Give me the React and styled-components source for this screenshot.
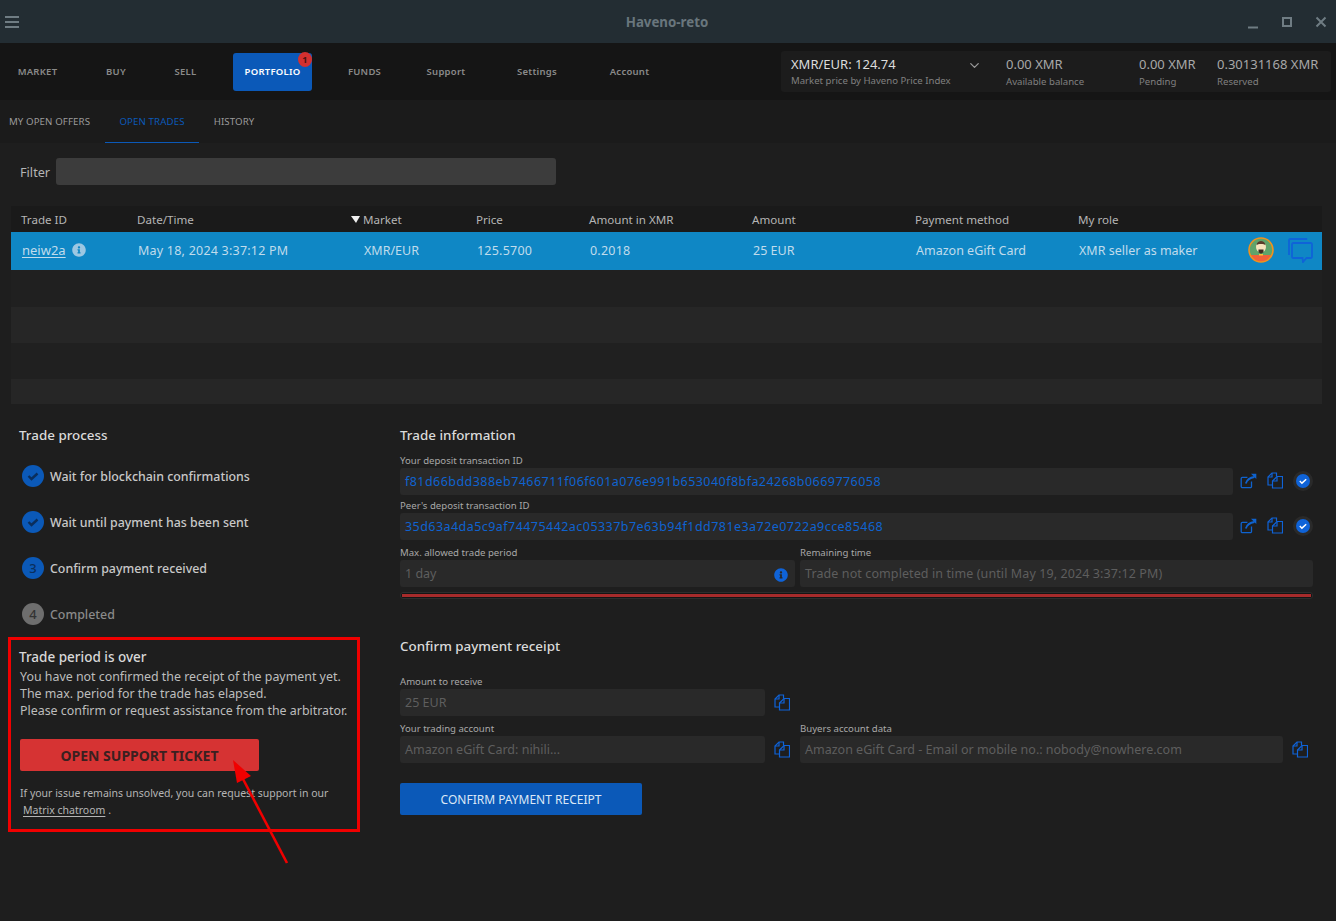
import React from "react";
import styled, { createGlobalStyle } from "styled-components";
import { FaInfoCircle } from "react-icons/fa";
import { ChevronDown } from "lucide-react";

const GlobalStyle = createGlobalStyle`
  html, body {
    margin: 0;
    padding: 0;
    background: #1e1e1e;
  }
  * {
    box-sizing: border-box;
  }
  body {
    font-family: "Noto Sans", "Liberation Sans", sans-serif;
    color: #c8c8c8;
  }
`;

const Page = styled.div`
  width: 1336px;
  height: 921px;
  overflow: hidden;
  position: relative;
  background: #1e1e1e;
`;

const TitleBar = styled.header`
  height: 43px;
  background: #232d33;
  display: flex;
  align-items: center;
  justify-content: space-between;
  padding: 0 8px 0 5px;
  position: relative;
`;

const AppTitle = styled.div`
  position: absolute;
  left: 0;
  right: 2px;
  text-align: center;
  font-size: 13.3px;
  font-weight: 700;
  color: #69767d;
`;

const WindowButtons = styled.div`
  display: flex;
  align-items: center;
  gap: 20px;
`;

const NavBar = styled.nav`
  height: 57px;
  background: #151515;
  display: flex;
  align-items: center;
  justify-content: space-between;
  padding-right: 5px;
`;

const NavItems = styled.div`
  display: flex;
  align-items: center;
`;

const NavItem = styled.div`
  width: ${(p) => p.$w}px;
  height: 38px;
  margin-left: ${(p) => p.$ml || 0}px;
  display: flex;
  align-items: center;
  justify-content: center;
  position: relative;
  font-size: 9.5px;
  font-weight: 600;
  letter-spacing: 0.25px;
  border-radius: 3px;
  color: ${(p) => (p.$active ? "#fff" : "#8a8a8a")};
  background: ${(p) => (p.$active ? "#0b59b8" : "transparent")};
`;

const Badge = styled.span`
  position: absolute;
  top: -1px;
  right: 0;
  width: 14px;
  height: 15px;
  border-radius: 50%;
  background: #d3302f;
  color: #4a1010;
  font-size: 9px;
  font-weight: 700;
  display: flex;
  align-items: center;
  justify-content: center;
`;

const BalancePanel = styled.div`
  width: 550px;
  height: 41px;
  background: #1c1c1c;
  border-radius: 3px;
  display: flex;
  align-items: center;
  padding-left: 10px;
  position: relative;
`;

const BalanceBlock = styled.div`
  width: ${(p) => p.$w}px;
  margin-top: ${(p) => p.$mt || 0}px;
  display: flex;
  flex-direction: column;
  gap: ${(p) => p.$gap}px;
`;

const BalanceValue = styled.div`
  font-size: 13px;
  line-height: 15px;
  color: ${(p) => (p.$bright ? "#dcdcdc" : "#a8a8a8")};
`;

const BalanceLabel = styled.div`
  font-size: 9.6px;
  line-height: 13px;
  color: #808080;
  white-space: nowrap;
`;

const PriceChevron = styled(ChevronDown)`
  position: absolute;
  left: 186px;
  top: 7px;
  color: #9a9a9a;
`;

const TabBar = styled.div`
  height: 43px;
  background: #1b1b1b;
  display: flex;
`;

const Tab = styled.div`
  width: ${(p) => p.$w}px;
  margin-left: ${(p) => p.$ml || 0}px;
  display: flex;
  align-items: center;
  justify-content: center;
  font-size: 9.7px;
  letter-spacing: 0.1px;
  color: ${(p) => (p.$active ? "#0b59b8" : "#9a9a9a")};
  border-bottom: 1px solid ${(p) => (p.$active ? "#0b59b8" : "transparent")};
`;

const FilterRow = styled.div`
  display: flex;
  align-items: center;
  gap: 6px;
  padding: 15px 0 0 20px;
  font-size: 12.7px;
  color: #b5b5b5;
`;

const FilterLabel = styled.span`
  margin-top: 1px;
`;

const FilterInput = styled.div`
  width: 500px;
  height: 27px;
  background: #3c3c3c;
  border-radius: 3px;
`;

const Table = styled.div`
  width: 1311px;
  margin: 21px 0 0 11px;
`;

const columns = "116px 224px 115px 113px 163px 163px 163px 1fr";

const HeaderRow = styled.div`
  display: grid;
  grid-template-columns: ${columns};
  height: 26px;
  align-items: center;
  background: #1a1a1a;
  font-size: 11.6px;
  color: #b5b5b5;
`;

const HeaderCell = styled.div`
  padding-left: 10px;
  display: flex;
  align-items: center;
  gap: 3px;
`;

const SortCaret = styled.span`
  width: 0;
  height: 0;
  border-left: 5px solid transparent;
  border-right: 4px solid transparent;
  border-top: 7px solid #f0f0f0;
  margin-left: -10px;
`;

const SelectedRow = styled.div`
  display: grid;
  grid-template-columns: ${columns};
  height: 38px;
  padding-bottom: 2px;
  align-items: center;
  background: #0f87c5;
  font-size: 12.5px;
  color: #c0dcec;
  position: relative;
`;

const BodyCell = styled.div`
  padding-left: 11px;
  display: flex;
  align-items: center;
  gap: 6px;
  white-space: nowrap;
  letter-spacing: ${(p) => (p.$wide ? "0.22px" : "0")};

  &:nth-child(3) {
    padding-left: 13px;
  }
`;

const TradeLink = styled.span`
  font-size: 13px;
  text-decoration: underline;
  text-underline-offset: 2px;
`;

const RowIcons = styled.div`
  position: absolute;
  right: 9px;
  top: 5px;
  display: flex;
  align-items: center;
  gap: 14px;
`;

const EmptyRow = styled.div`
  height: ${(p) => p.$h}px;
  background: ${(p) => (p.$alt ? "#262626" : "#202020")};
`;

const Lower = styled.div`
  display: grid;
  grid-template-columns: 400px 913px;
  padding-top: 22px;
`;

const LeftColumn = styled.section`
  display: flex;
  flex-direction: column;
`;

const RightColumn = styled.section`
  display: flex;
  flex-direction: column;
`;

const SectionTitle = styled.h2`
  margin: 0;
  font-size: 13.4px;
  line-height: 18px;
  font-weight: 500;
  color: #dadada;
`;

const ProcessTitle = styled(SectionTitle)`
  padding-left: 19px;
`;

const Steps = styled.div`
  display: flex;
  flex-direction: column;
  gap: 24px;
  padding: 21px 0 0 22px;
`;

const Step = styled.div`
  display: flex;
  align-items: center;
  gap: 6px;
  font-size: 12.4px;
  font-weight: 500;
  color: ${(p) => (p.$muted ? "#8a8a8a" : "#c8c8c8")};
`;

const StepCircle = styled.span`
  width: 22px;
  height: 22px;
  border-radius: 50%;
  background: ${(p) => (p.$muted ? "#6e6e6e" : "#0b59b8")};
  color: ${(p) => (p.$muted ? "#333" : "#0a2e5c")};
  font-size: 13px;
  display: flex;
  align-items: center;
  justify-content: center;
`;

const AlertBox = styled.div`
  width: 352px;
  height: 195px;
  margin: 12px 0 0 8px;
  padding: 8px 0 0 9px;
  border: 3px solid #f00000;
`;

const AlertTitle = styled.div`
  margin: 0 0 2px -1px;
  font-size: 13.5px;
  line-height: 18px;
  font-weight: 500;
  color: #d8d8d8;
`;

const AlertText = styled.div`
  font-size: 12.4px;
  line-height: 17px;
  color: #bdbdbd;
  white-space: nowrap;
`;

const SupportButton = styled.div`
  width: 239px;
  height: 32px;
  margin: 20px 0 14px;
  border-radius: 2px;
  background: #d63333;
  color: #3a2020;
  font-size: 14px;
  font-weight: 700;
  display: flex;
  align-items: center;
  justify-content: center;
`;

const SmallNote = styled.div`
  font-size: 10.5px;
  line-height: 17px;
  color: #b5b5b5;
  white-space: nowrap;
`;

const NoteLink = styled.span`
  margin-left: 3px;
  text-decoration: underline;
  text-underline-offset: 2px;
`;

const FieldRow = styled.div`
  display: flex;
  align-items: flex-start;
  gap: ${(p) => p.$gap ?? 5}px;
  margin-top: ${(p) => p.$mt || 0}px;
`;

const Field = styled.div`
  width: ${(p) => p.$w}px;
  margin-left: ${(p) => p.$ml || 0}px;
  flex-shrink: 0;
  display: flex;
  flex-direction: column;
`;

const FieldLabel = styled.label`
  font-size: 9.6px;
  line-height: 13px;
  margin-bottom: ${(p) => p.$mb || 0}px;
  color: #a8a8a8;
  white-space: nowrap;
`;

const FieldInput = styled.div`
  height: 27px;
  background: #292929;
  border-radius: 3px;
  padding: 0 7px 0 5px;
  display: flex;
  align-items: center;
  justify-content: space-between;
  font-size: 12.5px;
  letter-spacing: ${(p) => (p.$link ? "0.45px" : p.$wide ? "0.1px" : "0")};
  color: ${(p) => (p.$link ? "#0f63d0" : "#5e5e5e")};
  white-space: nowrap;
`;

const IconGroup = styled.div`
  display: flex;
  align-items: center;
  gap: 10px;
  height: 27px;
  margin-top: ${(p) => p.$mt || 14}px;
  padding-left: ${(p) => p.$pl || 0}px;
  flex-shrink: 0;
`;

const TickHalo = styled.span`
  width: 20px;
  height: 20px;
  border-radius: 50%;
  background: #2a2a2a;
  display: flex;
  align-items: center;
  justify-content: center;
`;

const TickDot = styled.span`
  width: 14px;
  height: 14px;
  border-radius: 50%;
  background: #0f63d8;
  display: flex;
  align-items: center;
  justify-content: center;
`;

const InfoMark = styled(FaInfoCircle)`
  color: ${(p) => p.$color};
  font-size: 14px;
  margin-top: ${(p) => p.$mt || 0}px;
`;

const ProgressTrack = styled.div`
  height: 7px;
  margin-top: 5px;
  border: 1px solid #2d2d2d;
  border-radius: 3px;
  background: #151515;
  padding: 1px;
  display: flex;
`;

const ProgressFill = styled.div`
  flex: 1;
  background: #a72b2b;
`;

const ConfirmTitle = styled(SectionTitle)`
  margin-top: 38px;
  margin-bottom: 20px;
`;

const ConfirmButton = styled.div`
  width: 242px;
  height: 32px;
  margin-top: 20px;
  border-radius: 2px;
  background: #0b59b8;
  color: #dbe8f6;
  font-size: 12px;
  display: flex;
  align-items: center;
  justify-content: center;
`;

const ArrowOverlay = styled.svg`
  position: absolute;
  left: 225px;
  top: 755px;
  pointer-events: none;
`;

const MenuIcon = () => (
  <svg width="16" height="14" viewBox="0 0 16 14" fill="#6f7c83">
    <rect x="0" y="1" width="14" height="2" />
    <rect x="0" y="6" width="14" height="2" />
    <rect x="0" y="11" width="14" height="2" />
  </svg>
);

const WindowIcon = ({ kind }) => (
  <svg width="14" height="14" viewBox="0 0 14 14" fill="none" stroke="#6f7c83" strokeWidth="2">
    {kind === "min" && <path d="M2 12.5h10" />}
    {kind === "max" && <rect x="3" y="3" width="8" height="8" />}
    {kind === "close" && <path d="M2.5 2.5l9 9M11.5 2.5l-9 9" />}
  </svg>
);

const CheckMark = ({ size = 14, color = "#0a2e5c", width = 2.4 }) => (
  <svg width={size} height={size} viewBox="0 0 14 14" fill="none" stroke={color} strokeWidth={width}>
    <path d="M2.5 7l3 3 6-5.5" />
  </svg>
);

const OpenIcon = () => (
  <svg width="17" height="16" viewBox="0 0 17 16" fill="none" stroke="#0f63d0" strokeWidth="1.3">
    <path d="M11.5 8.5v5a1.2 1.2 0 0 1-1.2 1.2H2.4a1.2 1.2 0 0 1-1.2-1.2V5.6a1.2 1.2 0 0 1 1.2-1.2h5" />
    <path d="M5.8 10.5C7 6.5 10 4.6 14.5 4" strokeWidth="1.8" />
    <path d="M11 .8h5.3v5.3z" fill="#0f63d0" stroke="none" />
  </svg>
);

const CopyIcon = () => (
  <svg width="16" height="17" viewBox="0 0 16 17" fill="none" stroke="#0f63d8" strokeWidth="1.2">
    <path d="M9.5 4.5V1H5L1 5v8h4.5" />
    <path d="M5 1v4H1" />
    <path d="M5.5 16V9L10 4.5h5.5V16z" />
    <path d="M10 4.5V9H5.5" />
  </svg>
);

const ChatIcon = () => (
  <svg width="25" height="25" viewBox="0 0 25 25" fill="none" stroke="#0f63d8" strokeWidth="1.8">
    <path d="M1 17V2.2A1.2 1.2 0 0 1 2.2 1h17" />
    <path d="M5.2 5h17.6A1.2 1.2 0 0 1 24 6.2v12.6a1.2 1.2 0 0 1-1.2 1.2h-4.3l-3.5 4-.5-4H5.2A1.2 1.2 0 0 1 4 18.8V6.2A1.2 1.2 0 0 1 5.2 5z" />
  </svg>
);

const Avatar = () => (
  <svg width="26" height="26" viewBox="0 0 26 26">
    <defs>
      <clipPath id="avatarClip">
        <circle cx="13" cy="13" r="12" />
      </clipPath>
    </defs>
    <circle cx="13" cy="13" r="12" fill="#5fa36a" />
    <g clipPath="url(#avatarClip)">
      <rect x="0" y="18" width="26" height="8" fill="#f0603a" />
      <ellipse cx="13" cy="10" rx="5" ry="5.5" fill="#f5e3bd" />
      <path d="M8.5 8c.5-3 2.5-4 4.5-4s4 1 4.5 4c-1.5-1.5-7.5-1.5-9 0z" fill="#5a3c2a" />
      <path d="M10.5 12.5h5v2.8l-2.5 1.5-2.5-1.5z" fill="#3d2c22" />
      <rect x="11" y="17" width="4" height="1.5" fill="#f3c33a" />
    </g>
    <circle cx="13" cy="13" r="12" fill="none" stroke="#f0921e" strokeWidth="1.6" />
  </svg>
);

const navLeft = [
  { label: "MARKET", w: 75 },
  { label: "BUY", w: 82 },
  { label: "SELL", w: 57 },
];

const navRight = [
  { label: "FUNDS", w: 105 },
  { label: "Support", w: 58 },
  { label: "Settings", w: 124 },
  { label: "Account", w: 61 },
];

const tableColumns = [
  "Trade ID",
  "Date/Time",
  "Market",
  "Price",
  "Amount in XMR",
  "Amount",
  "Payment method",
  "My role",
];

const rowCells = [
  { text: "May 18, 2024 3:37:12 PM", wide: true },
  { text: "XMR/EUR" },
  { text: "125.5700", wide: true },
  { text: "0.2018", wide: true },
  { text: "25 EUR" },
  { text: "Amazon eGift Card" },
  { text: "XMR seller as maker" },
];

const steps = [
  { label: "Wait for blockchain confirmations", done: true },
  { label: "Wait until payment has been sent", done: true },
  { label: "Confirm payment received", n: 3 },
  { label: "Completed", n: 4, muted: true },
];

const TxActions = () => (
  <IconGroup $mt={13} $pl={7}>
    <OpenIcon />
    <CopyIcon />
    <TickHalo>
      <TickDot>
        <CheckMark size={10} color="#fff" width={2} />
      </TickDot>
    </TickHalo>
  </IconGroup>
);

export default function App() {
  return (
    <Page>
      <GlobalStyle />
      <TitleBar>
        <MenuIcon />
        <AppTitle>Haveno-reto</AppTitle>
        <WindowButtons>
          <WindowIcon kind="min" />
          <WindowIcon kind="max" />
          <WindowIcon kind="close" />
        </WindowButtons>
      </TitleBar>

      <NavBar>
        <NavItems>
          {navLeft.map((n) => (
            <NavItem key={n.label} $w={n.w}>{n.label}</NavItem>
          ))}
          <NavItem $w={79} $ml={19} $active>
            PORTFOLIO
            <Badge>1</Badge>
          </NavItem>
          {navRight.map((n) => (
            <NavItem key={n.label} $w={n.w}>{n.label}</NavItem>
          ))}
        </NavItems>
        <BalancePanel>
          <BalanceBlock $w={215} $gap={2}>
            <BalanceValue $bright>XMR/EUR: 124.74</BalanceValue>
            <BalanceLabel>Market price by Haveno Price Index</BalanceLabel>
          </BalanceBlock>
          <PriceChevron size={15} />
          <BalanceBlock $w={133} $gap={3} $mt={2}>
            <BalanceValue>0.00 XMR</BalanceValue>
            <BalanceLabel>Available balance</BalanceLabel>
          </BalanceBlock>
          <BalanceBlock $w={78} $gap={3} $mt={2}>
            <BalanceValue>0.00 XMR</BalanceValue>
            <BalanceLabel>Pending</BalanceLabel>
          </BalanceBlock>
          <BalanceBlock $w={110} $gap={3} $mt={2}>
            <BalanceValue>0.30131168 XMR</BalanceValue>
            <BalanceLabel>Reserved</BalanceLabel>
          </BalanceBlock>
        </BalancePanel>
      </NavBar>

      <TabBar>
        <Tab $w={99}>MY OPEN OFFERS</Tab>
        <Tab $w={94} $ml={6} $active>OPEN TRADES</Tab>
        <Tab $w={70}>HISTORY</Tab>
      </TabBar>

      <FilterRow>
        <FilterLabel>Filter</FilterLabel>
        <FilterInput />
      </FilterRow>

      <Table>
        <HeaderRow>
          {tableColumns.map((c) => (
            <HeaderCell key={c}>
              {c === "Market" && <SortCaret />}
              {c}
            </HeaderCell>
          ))}
        </HeaderRow>
        <SelectedRow>
          <BodyCell>
            <TradeLink>neiw2a</TradeLink>
            <InfoMark $color="#9cc7e2" />
          </BodyCell>
          {rowCells.map((c) => (
            <BodyCell key={c.text} $wide={c.wide}>{c.text}</BodyCell>
          ))}
          <RowIcons>
            <Avatar />
            <ChatIcon />
          </RowIcons>
        </SelectedRow>
        <EmptyRow $h={37} />
        <EmptyRow $h={36} $alt />
        <EmptyRow $h={36} />
        <EmptyRow $h={25} $alt />
      </Table>

      <Lower>
        <LeftColumn>
          <ProcessTitle>Trade process</ProcessTitle>
          <Steps>
            {steps.map((s) => (
              <Step key={s.label} $muted={s.muted}>
                <StepCircle $muted={s.muted}>{s.done ? <CheckMark /> : s.n}</StepCircle>
                {s.label}
              </Step>
            ))}
          </Steps>
          <AlertBox>
            <AlertTitle>Trade period is over</AlertTitle>
            <AlertText>You have not confirmed the receipt of the payment yet.</AlertText>
            <AlertText>The max. period for the trade has elapsed.</AlertText>
            <AlertText>Please confirm or request assistance from the arbitrator.</AlertText>
            <SupportButton>OPEN SUPPORT TICKET</SupportButton>
            <SmallNote>If your issue remains unsolved, you can request support in our</SmallNote>
            <SmallNote>
              <NoteLink>Matrix chatroom</NoteLink> .
            </SmallNote>
          </AlertBox>
        </LeftColumn>

        <RightColumn>
          <SectionTitle>Trade information</SectionTitle>
          <FieldRow $gap={0} $mt={10}>
            <Field $w={833}>
              <FieldLabel $mb={1}>Your deposit transaction ID</FieldLabel>
              <FieldInput $link>f81d66bdd388eb7466711f06f601a076e991b653040f8bfa24268b0669776058</FieldInput>
            </Field>
            <TxActions />
          </FieldRow>
          <FieldRow $gap={0} $mt={4}>
            <Field $w={833}>
              <FieldLabel $mb={1}>Peer's deposit transaction ID</FieldLabel>
              <FieldInput $link>35d63a4da5c9af74475442ac05337b7e63b94f1dd781e3a72e0722a9cce85468</FieldInput>
            </Field>
            <TxActions />
          </FieldRow>
          <FieldRow $mt={6}>
            <Field $w={395}>
              <FieldLabel $mb={1}>Max. allowed trade period</FieldLabel>
              <FieldInput>
                1 day
                <InfoMark $color="#0f63d8" $mt={2} />
              </FieldInput>
            </Field>
            <Field $w={513}>
              <FieldLabel $mb={1}>Remaining time</FieldLabel>
              <FieldInput $wide>Trade not completed in time (until May 19, 2024 3:37:12 PM)</FieldInput>
            </Field>
          </FieldRow>
          <ProgressTrack>
            <ProgressFill />
          </ProgressTrack>
          <ConfirmTitle>Confirm payment receipt</ConfirmTitle>
          <FieldRow $gap={0}>
            <Field $w={365}>
              <FieldLabel $mb={1}>Amount to receive</FieldLabel>
              <FieldInput>25 EUR</FieldInput>
            </Field>
            <IconGroup $pl={9}>
              <CopyIcon />
            </IconGroup>
          </FieldRow>
          <FieldRow $gap={0} $mt={6}>
            <Field $w={365}>
              <FieldLabel $mb={1}>Your trading account</FieldLabel>
              <FieldInput>Amazon eGift Card: nihili...</FieldInput>
            </Field>
            <IconGroup $pl={9}>
              <CopyIcon />
            </IconGroup>
            <Field $w={483} $ml={10}>
              <FieldLabel $mb={1}>Buyers account data</FieldLabel>
              <FieldInput>Amazon eGift Card - Email or mobile no.: nobody@nowhere.com</FieldInput>
            </Field>
            <IconGroup $pl={9}>
              <CopyIcon />
            </IconGroup>
          </FieldRow>
          <ConfirmButton>CONFIRM PAYMENT RECEIPT</ConfirmButton>
        </RightColumn>
      </Lower>

      <ArrowOverlay width="70" height="115" viewBox="0 0 70 115">
        <path d="M62 108L18 24" stroke="#f00000" strokeWidth="2.6" fill="none" />
        <path d="M8 5L12 28L26 21z" fill="#f00000" />
      </ArrowOverlay>
    </Page>
  );
}
